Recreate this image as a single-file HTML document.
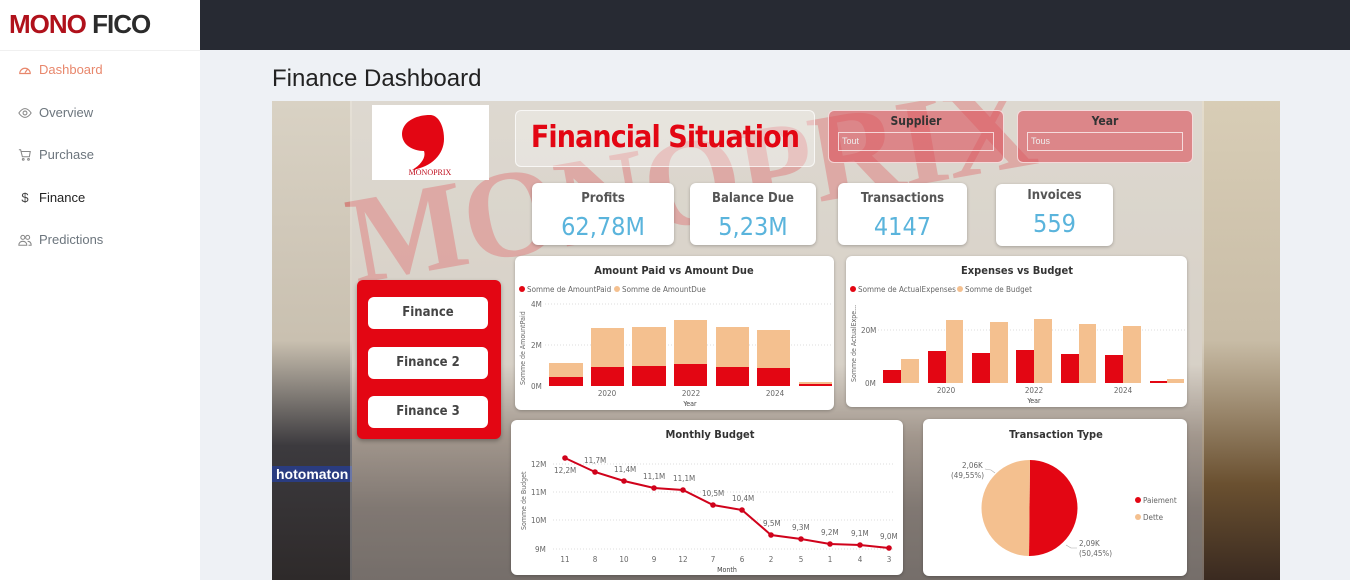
<!DOCTYPE html>
<html><head><meta charset="utf-8"><style>
*{margin:0;padding:0;box-sizing:border-box}
body{width:1350px;height:580px;overflow:hidden;background:#eef1f5;font-family:"Liberation Sans",sans-serif;position:relative}
.abs{position:absolute}
.side{left:0;top:0;width:200px;height:580px;background:#fff}
.nav{position:absolute;left:18px;font-size:13px;color:#6c757d;display:flex;align-items:center;gap:7px}
.card{position:absolute;background:#fff;border-radius:6px;box-shadow:0 1px 3px rgba(0,0,0,.25)}
.kt{font-family:"DejaVu Sans Condensed",sans-serif;font-weight:bold;color:#555;font-size:13px;text-align:center}
.kv{font-family:"DejaVu Sans Condensed",sans-serif;color:#5ab4dc;font-size:25px;text-align:center;line-height:1}
.btn{position:absolute;left:368px;width:120px;height:32px;background:#fff;border-radius:6px;font-weight:bold;font-size:13px;color:#444;text-align:center;line-height:32px;font-family:"DejaVu Sans Condensed",sans-serif}
</style></head><body>
<div class="abs side"></div>
<div class="abs" style="left:0;top:50px;width:200px;height:1px;background:#f0f0f0"></div>
<div class="abs" style="left:9px;top:9px;font-size:26px;font-weight:bold;letter-spacing:-1px"><span style="color:#b0111b">MONO</span> <span style="color:#2b2b2b">FICO</span></div>
<div class="nav" style="top:62px;color:#e8876c"><svg width="14" height="14" viewBox="0 0 16 16" fill="none" stroke="#e8876c" stroke-width="1.3"><path d="M2 12a6 6 0 1 1 12 0zM8 11l3-4"/></svg>Dashboard</div>
<div class="nav" style="top:105px"><svg width="14" height="14" viewBox="0 0 16 16" fill="none" stroke="#888" stroke-width="1.2"><path d="M1 8s3-5 7-5 7 5 7 5-3 5-7 5-7-5-7-5z"/><circle cx="8" cy="8" r="2.2"/></svg>Overview</div>
<div class="nav" style="top:147px"><svg width="14" height="14" viewBox="0 0 16 16" fill="none" stroke="#888" stroke-width="1.2"><path d="M1 2h2l2 8h8l1-6H4"/><circle cx="6" cy="13" r="1"/><circle cx="12" cy="13" r="1"/></svg>Purchase</div>
<div class="nav" style="top:190px;color:#222"><span style="width:14px;text-align:center;color:#444">$</span>Finance</div>
<div class="nav" style="top:232px"><svg width="14" height="14" viewBox="0 0 16 16" fill="none" stroke="#888" stroke-width="1.2"><circle cx="5.5" cy="5" r="2.3"/><circle cx="11" cy="5" r="2.3"/><path d="M1 14c0-3 2-4.5 4.5-4.5S10 11 10 14zM11 9.5c2.5 0 4 1.5 4 4.5h-3"/></svg>Predictions</div>
<div class="abs" style="left:200px;top:0;width:1150px;height:50px;background:#272a33"></div>
<div class="abs" style="left:272px;top:65px;font-size:24px;color:#222">Finance Dashboard</div>

<div class="abs" style="left:272px;top:101px;width:1008px;height:479px;overflow:hidden;background:linear-gradient(180deg,#cfc8bc 0%,#c6bdaf 55%,#7a6a5c 70%,#4a3e36 85%,#3a302a 100%)">
 <div class="abs" style="left:0;top:0;width:80px;height:479px;background:linear-gradient(180deg,#d9d2c4 0%,#c9c0b0 50%,#3c3a3e 72%,#2e2a2a 100%)"></div>
 <div class="abs" style="left:930px;top:0;width:78px;height:479px;background:linear-gradient(180deg,#d8cdb6 0%,#c8bca6 50%,#6a5030 80%,#3a2a20 100%)"></div>
 <div class="abs" style="left:90px;top:70px;font-size:125px;font-weight:bold;color:rgba(210,70,70,.5);font-family:'Liberation Serif',serif;transform:rotate(-10deg);transform-origin:0 100%;letter-spacing:-2px">MONOPRIX</div>
 <div class="abs" style="left:0;top:365px;font-size:14px;font-weight:bold;color:#fff;background:#2a3c80;padding:0 4px">hotomaton</div>
 <div class="abs" style="left:78px;top:0;width:854px;height:479px;background:rgba(255,255,255,.3)"></div>
</div>

<div class="abs" style="left:372px;top:105px;width:117px;height:75px;background:#fff"></div>
<svg class="abs" style="left:372px;top:105px" width="117" height="75"><path d="M58 10c-16 0-28 8-28 19s11 17 22 17c2 6-2 13-12 19 20-3 32-16 32-31 0-14-6-24-14-24z" fill="#e30613"/><text x="58" y="70" font-size="8" fill="#c01020" text-anchor="middle" font-family="Liberation Serif">MONOPRIX</text></svg>

<div class="abs" style="left:515px;top:110px;width:300px;height:57px;border:1.5px solid rgba(255,255,255,.7);border-radius:6px;background:rgba(255,255,255,.3);color:#e30613;font-family:'DejaVu Sans Condensed',sans-serif;font-weight:bold;font-size:30px;letter-spacing:-0.9px;text-align:center;line-height:54px">Financial Situation</div>
<div class="abs" style="left:828px;top:110px;width:176px;height:53px;border:1.5px solid rgba(255,255,255,.7);border-radius:6px;background:rgba(220,80,90,.6)"><div style="text-align:center;font-weight:bold;font-size:12px;color:#333;margin-top:3px;font-family:'DejaVu Sans Condensed',sans-serif">Supplier</div><div style="margin:4px 9px 0;height:19px;border:1px solid rgba(255,255,255,.7);font-size:9px;color:#eee;padding:3px">Tout</div></div>
<div class="abs" style="left:1017px;top:110px;width:176px;height:53px;border:1.5px solid rgba(255,255,255,.7);border-radius:6px;background:rgba(220,80,90,.6)"><div style="text-align:center;font-weight:bold;font-size:12px;color:#333;margin-top:3px;font-family:'DejaVu Sans Condensed',sans-serif">Year</div><div style="margin:4px 9px 0;height:19px;border:1px solid rgba(255,255,255,.7);font-size:9px;color:#eee;padding:3px">Tous</div></div>

<div class="card" style="left:532px;top:183px;width:142px;height:62px"><div class="kt" style="margin-top:8px">Profits</div><div class="kv" style="margin-top:8px">62,78M</div></div>
<div class="card" style="left:690px;top:183px;width:126px;height:62px"><div class="kt" style="margin-top:8px">Balance Due</div><div class="kv" style="margin-top:8px">5,23M</div></div>
<div class="card" style="left:838px;top:183px;width:129px;height:62px"><div class="kt" style="margin-top:8px">Transactions</div><div class="kv" style="margin-top:8px">4147</div></div>
<div class="card" style="left:996px;top:184px;width:117px;height:62px"><div class="kt" style="margin-top:4px">Invoices</div><div class="kv" style="margin-top:8px">559</div></div>

<div class="abs" style="left:357px;top:280px;width:144px;height:159px;background:#e30613;border-radius:6px;box-shadow:0 2px 4px rgba(0,0,0,.3)"></div>
<div class="btn" style="top:297px">Finance</div>
<div class="btn" style="top:347px">Finance 2</div>
<div class="btn" style="top:396px">Finance 3</div>

<div class="card" style="left:515px;top:256px;width:319px;height:154px"></div>
<div class="card" style="left:846px;top:256px;width:341px;height:151px"></div>
<div class="card" style="left:511px;top:420px;width:392px;height:155px"></div>
<div class="card" style="left:923px;top:419px;width:264px;height:157px"></div>

<svg class="abs" style="left:0;top:0" width="1350" height="580" font-family="DejaVu Sans Condensed,Liberation Sans,sans-serif">
<g font-size="8" fill="#666">
<text x="674" y="274" font-size="11" font-weight="bold" fill="#333" text-anchor="middle">Amount Paid vs Amount Due</text>
<circle cx="522" cy="289" r="3" fill="#e30613"/><text x="527" y="292">Somme de AmountPaid</text>
<circle cx="617" cy="289" r="3" fill="#f4c08f"/><text x="622" y="292">Somme de AmountDue</text>
<g stroke="#ddd" stroke-dasharray="1,2"><line x1="545" y1="304" x2="832" y2="304"/><line x1="545" y1="345" x2="832" y2="345"/></g>
<text x="531" y="307">4M</text><text x="531" y="348">2M</text><text x="531" y="389">0M</text>
<text transform="translate(525,385) rotate(-90)" font-size="7">Somme de AmountPaid</text>
<g fill="#f4c08f"><rect x="549" y="363" width="34" height="23"/><rect x="591" y="328" width="33" height="58"/><rect x="632" y="327" width="34" height="59"/><rect x="674" y="320" width="33" height="66"/><rect x="716" y="327" width="33" height="59"/><rect x="757" y="330" width="33" height="56"/><rect x="799" y="382" width="33" height="4"/></g>
<g fill="#e30613"><rect x="549" y="377" width="34" height="9"/><rect x="591" y="367" width="33" height="19"/><rect x="632" y="366" width="34" height="20"/><rect x="674" y="364" width="33" height="22"/><rect x="716" y="367" width="33" height="19"/><rect x="757" y="368" width="33" height="18"/><rect x="799" y="384" width="33" height="2"/></g>
<text x="607" y="396" text-anchor="middle">2020</text><text x="691" y="396" text-anchor="middle">2022</text><text x="775" y="396" text-anchor="middle">2024</text>
<text x="690" y="406" text-anchor="middle" font-size="7" fill="#444">Year</text>
<text x="1017" y="274" font-size="11" font-weight="bold" fill="#333" text-anchor="middle">Expenses vs Budget</text>
<circle cx="853" cy="289" r="3" fill="#e30613"/><text x="858" y="292">Somme de ActualExpenses</text>
<circle cx="960" cy="289" r="3" fill="#f4c08f"/><text x="965" y="292">Somme de Budget</text>
<line x1="878" y1="330" x2="1185" y2="330" stroke="#ddd" stroke-dasharray="1,2"/>
<text x="861" y="333">20M</text><text x="865" y="386">0M</text>
<text transform="translate(856,382) rotate(-90)" font-size="7">Somme de ActualExpe...</text>
<g fill="#e30613"><rect x="883" y="370" width="18" height="13"/><rect x="928" y="351" width="18" height="32"/><rect x="972" y="353" width="18" height="30"/><rect x="1016" y="350" width="18" height="33"/><rect x="1061" y="354" width="18" height="29"/><rect x="1105" y="355" width="18" height="28"/><rect x="1150" y="381" width="17" height="2"/></g>
<g fill="#f4c08f"><rect x="901" y="359" width="18" height="24"/><rect x="946" y="320" width="17" height="63"/><rect x="990" y="322" width="18" height="61"/><rect x="1034" y="319" width="18" height="64"/><rect x="1079" y="324" width="17" height="59"/><rect x="1123" y="326" width="18" height="57"/><rect x="1167" y="379" width="17" height="4"/></g>
<text x="946" y="393" text-anchor="middle">2020</text><text x="1034" y="393" text-anchor="middle">2022</text><text x="1123" y="393" text-anchor="middle">2024</text>
<text x="1034" y="403" text-anchor="middle" font-size="7" fill="#444">Year</text>
<text x="710" y="438" font-size="11" font-weight="bold" fill="#333" text-anchor="middle">Monthly Budget</text>
<g stroke="#ddd" stroke-dasharray="1,2"><line x1="553" y1="464" x2="895" y2="464"/><line x1="553" y1="492" x2="895" y2="492"/><line x1="553" y1="520" x2="895" y2="520"/><line x1="553" y1="549" x2="895" y2="549"/></g>
<text x="531" y="467">12M</text><text x="531" y="495">11M</text><text x="531" y="523">10M</text><text x="535" y="552">9M</text>
<text transform="translate(526,530) rotate(-90)" font-size="7">Somme de Budget</text>
<polyline fill="none" stroke="#d0021b" stroke-width="2" points="565,458 595,472 624,481 654,488 683,490 713,505 742,510 771,535 801,539 830,544 860,545 889,548"/>
<g fill="#d0021b"><circle cx="565" cy="458" r="2.8"/><circle cx="595" cy="472" r="2.8"/><circle cx="624" cy="481" r="2.8"/><circle cx="654" cy="488" r="2.8"/><circle cx="683" cy="490" r="2.8"/><circle cx="713" cy="505" r="2.8"/><circle cx="742" cy="510" r="2.8"/><circle cx="771" cy="535" r="2.8"/><circle cx="801" cy="539" r="2.8"/><circle cx="830" cy="544" r="2.8"/><circle cx="860" cy="545" r="2.8"/><circle cx="889" cy="548" r="2.8"/></g>
<text x="554" y="473">12,2M</text><text x="584" y="463">11,7M</text><text x="614" y="472">11,4M</text><text x="643" y="479">11,1M</text><text x="673" y="481">11,1M</text><text x="702" y="496">10,5M</text><text x="732" y="501">10,4M</text><text x="763" y="526">9,5M</text><text x="792" y="530">9,3M</text><text x="821" y="535">9,2M</text><text x="851" y="536">9,1M</text><text x="880" y="539">9,0M</text>
<g text-anchor="middle"><text x="565" y="562">11</text><text x="595" y="562">8</text><text x="624" y="562">10</text><text x="654" y="562">9</text><text x="683" y="562">12</text><text x="713" y="562">7</text><text x="742" y="562">6</text><text x="771" y="562">2</text><text x="801" y="562">5</text><text x="830" y="562">1</text><text x="860" y="562">4</text><text x="889" y="562">3</text></g>
<text x="727" y="572" text-anchor="middle" font-size="7" fill="#444">Month</text>
<text x="1056" y="438" font-size="11" font-weight="bold" fill="#333" text-anchor="middle">Transaction Type</text>
<path d="M1030 460 A48 48 0 0 1 1029 556 Z" fill="#e30613"/>
<path d="M1030 460 A48 48 0 0 0 1029 556 Z" fill="#f4c08f"/>
<text x="962" y="468">2,06K</text><text x="951" y="478">(49,55%)</text>
<path d="M985 469 l6 1 l4 3" fill="none" stroke="#aaa" stroke-width=".6"/>
<text x="1079" y="546">2,09K</text><text x="1079" y="556">(50,45%)</text>
<path d="M1066 545 l5 3 h6" fill="none" stroke="#aaa" stroke-width=".6"/>
<circle cx="1138" cy="500" r="3" fill="#e30613"/><text x="1143" y="503">Paiement</text>
<circle cx="1138" cy="517" r="3" fill="#f4c08f"/><text x="1143" y="520">Dette</text>
</g>
</svg>
</body></html>
